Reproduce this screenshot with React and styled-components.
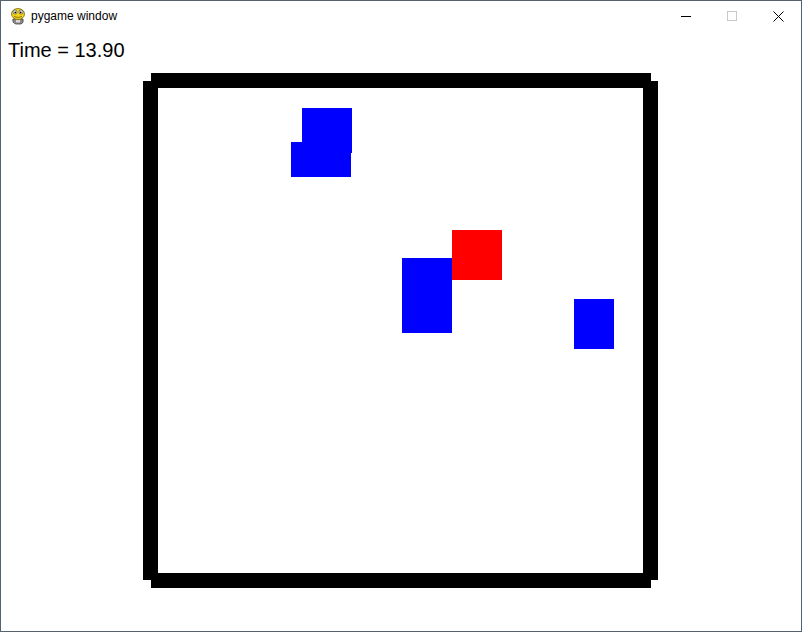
import React from 'react';
import styled, { createGlobalStyle } from 'styled-components';

const GlobalStyle = createGlobalStyle`
  html, body {
    margin: 0;
    padding: 0;
    background: #fff;
  }
`;

const Window = styled.div`
  width: 802px;
  height: 632px;
  box-sizing: border-box;
  border: 1px solid #56626e;
  display: flex;
  flex-direction: column;
  background: #fff;
  overflow: hidden;
`;

const TitleBar = styled.div`
  height: 30px;
  display: flex;
  align-items: center;
  flex-shrink: 0;
`;

const AppIcon = styled.div`
  width: 16px;
  height: 18px;
  margin: 0 5px 0 9px;
  display: flex;
`;

const Title = styled.div`
  flex: 1;
  font-family: "Liberation Sans", Arial, sans-serif;
  font-size: 12px;
  line-height: 14px;
  color: #000;
`;

const CaptionButton = styled.div`
  width: 46px;
  height: 30px;
  display: flex;
  align-items: center;
  justify-content: center;
`;

const Client = styled.div`
  position: relative;
  flex: 1;
`;

const TimeLabel = styled.div`
  padding: 8px 0 0 7px;
  font-family: "Liberation Sans", Arial, sans-serif;
  font-size: 20px;
  line-height: 23px;
  color: #000;
`;

const Wall = styled.div`
  position: absolute;
  background: #000;
`;

const Block = styled.div`
  position: absolute;
  background: ${p => (p.hero ? '#ff0000' : '#0000ff')};
`;

const walls = [
  { x: 150, y: 42, w: 500, h: 15 },
  { x: 150, y: 542, w: 500, h: 15 },
  { x: 142, y: 50, w: 15, h: 499 },
  { x: 642, y: 50, w: 15, h: 499 },
];

const blocks = [
  { x: 301, y: 77, w: 50, h: 45 },
  { x: 290, y: 111, w: 60, h: 35 },
  { x: 401, y: 227, w: 50, h: 75 },
  { x: 573, y: 268, w: 40, h: 50 },
  { x: 451, y: 199, w: 50, h: 50, hero: true },
];

const PygameIcon = () => (
  <svg width="16" height="18" viewBox="0 0 16 18">
    <path d="M3 12 Q2 16 6 17 L11 17 Q14 16 13 12 Z" fill="#8a8a8a" stroke="#444" strokeWidth="0.8" />
    <rect x="6" y="12.5" width="4" height="3" fill="#d9d9d9" />
    <ellipse cx="8" cy="7" rx="6.5" ry="5.5" fill="#f2d21b" stroke="#7a6a00" strokeWidth="0.8" />
    <circle cx="5" cy="5" r="2" fill="#fff" stroke="#333" strokeWidth="0.6" />
    <circle cx="11" cy="5" r="2" fill="#fff" stroke="#333" strokeWidth="0.6" />
    <circle cx="5.3" cy="5.3" r="0.9" fill="#000" />
    <circle cx="10.7" cy="5.3" r="0.9" fill="#000" />
    <path d="M4 9.5 Q8 11.5 12 9.5" fill="none" stroke="#7a6a00" strokeWidth="0.8" />
  </svg>
);

const App = () => (
  <>
    <GlobalStyle />
    <Window>
      <TitleBar>
        <AppIcon>
          <PygameIcon />
        </AppIcon>
        <Title>pygame window</Title>
        <CaptionButton>
          <svg width="10" height="10" viewBox="0 0 10 10">
            <rect x="0" y="5" width="10" height="1" fill="#000" />
          </svg>
        </CaptionButton>
        <CaptionButton>
          <svg width="10" height="10" viewBox="0 0 10 10">
            <rect x="0.5" y="0.5" width="9" height="9" fill="none" stroke="#c8c8c8" strokeWidth="1" />
          </svg>
        </CaptionButton>
        <CaptionButton>
          <svg width="11" height="11" viewBox="0 0 11 11">
            <path d="M0.5 0.5 L10.5 10.5 M10.5 0.5 L0.5 10.5" stroke="#000" strokeWidth="1" />
          </svg>
        </CaptionButton>
      </TitleBar>
      <Client>
        <TimeLabel>Time = 13.90</TimeLabel>
        {walls.map((r, i) => (
          <Wall key={i} style={{ left: r.x, top: r.y, width: r.w, height: r.h }} />
        ))}
        {blocks.map((b, i) => (
          <Block key={i} hero={b.hero} style={{ left: b.x, top: b.y, width: b.w, height: b.h }} />
        ))}
      </Client>
    </Window>
  </>
);

export default App;
